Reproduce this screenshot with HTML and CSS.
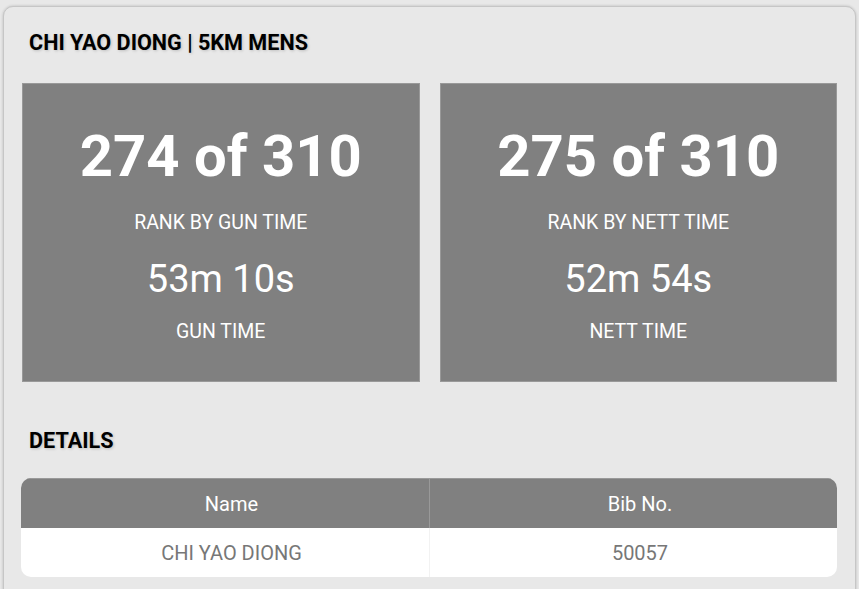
FILE: index.html
```html
<!DOCTYPE html>
<html lang="en">
<head>
    <meta charset="UTF-8">
    <meta name="viewport" content="width=device-width, initial-scale=1.0">
    <link rel="stylesheet" href="styles.css">
    <title>Race Result</title>
</head>
<body>
    <div class="page">
        <div class="card">
            <h2 class="heading">CHI YAO DIONG | 5KM MENS</h2>
            <div class="stats">
                <div class="stat-box">
                    <div class="rank">274 of 310</div>
                    <div class="label">RANK BY GUN TIME</div>
                    <div class="time">53m 10s</div>
                    <div class="label label-last">GUN TIME</div>
                </div>
                <div class="stat-box">
                    <div class="rank">275 of 310</div>
                    <div class="label">RANK BY NETT TIME</div>
                    <div class="time">52m 54s</div>
                    <div class="label label-last">NETT TIME</div>
                </div>
            </div>

            <h2 class="heading details-heading">DETAILS</h2>
            <table class="details">
                <thead>
                    <tr>
                        <th>Name</th>
                        <th>Bib No.</th>
                    </tr>
                </thead>
                <tbody>
                    <tr>
                        <td>CHI YAO DIONG</td>
                        <td>50057</td>
                    </tr>
                </tbody>
            </table>
        </div>
    </div>
</body>
</html>
```

FILE: styles.css
```css
/* result page */
body {
    font-family: Roboto, "Liberation Sans", Arial, sans-serif;
    background-color: #e8e8e8;
    margin: 0;
    padding: 0;
}

.page {
    padding: 6px 3px 0 3px;
}

.card {
    background-color: #e8e8e8;
    border: 1px solid #c6c6c6;
    border-radius: 10px;
    box-shadow: 0 0 3px rgba(0, 0, 0, 0.2);
    padding: 23px 18px 30px 17px;
}

.heading {
    margin: 0 0 27px 8px;
    font-size: 21.6px;
    line-height: 26px;
    font-weight: bold;
    color: #000;
    text-shadow: 1px 1px 3px rgba(0, 0, 0, 0.18);
}

.stats {
    display: grid;
    grid-template-columns: 1fr 1fr;
    gap: 20px;
    margin-left: 1px;
}

.stat-box {
    background-color: #808080;
    border: 1px solid #999;
    color: #fff;
    text-align: center;
    padding: 38px 10px 37px;
}

.rank {
    font-size: 58px;
    line-height: 68px;
    font-weight: bold;
}

.label {
    font-size: 19.5px;
    line-height: 24px;
    margin-top: 21px;
}

.time {
    font-size: 38px;
    line-height: 44px;
    margin-top: 22px;
}

.label-last {
    margin-top: 19px;
}

.details-heading {
    margin-top: 46px;
    margin-bottom: 24px;
}

.details {
    width: 100%;
    border-collapse: separate;
    border-spacing: 0;
    border-radius: 10px;
    overflow: hidden;
    background-color: #fff;
}

.details th,
.details td {
    width: 50%;
    height: 49px;
    padding: 0 0 0 13px;
    font-size: 20px;
    font-weight: normal;
    text-align: center;
}

.details th {
    background-color: #808080;
    color: #fff;
    border-top: 1px solid #999;
}

.details th + th {
    border-left: 1px solid #999;
}

.details td {
    color: #777;
}

.details td + td {
    border-left: 1px solid #f2f2f2;
}
```
